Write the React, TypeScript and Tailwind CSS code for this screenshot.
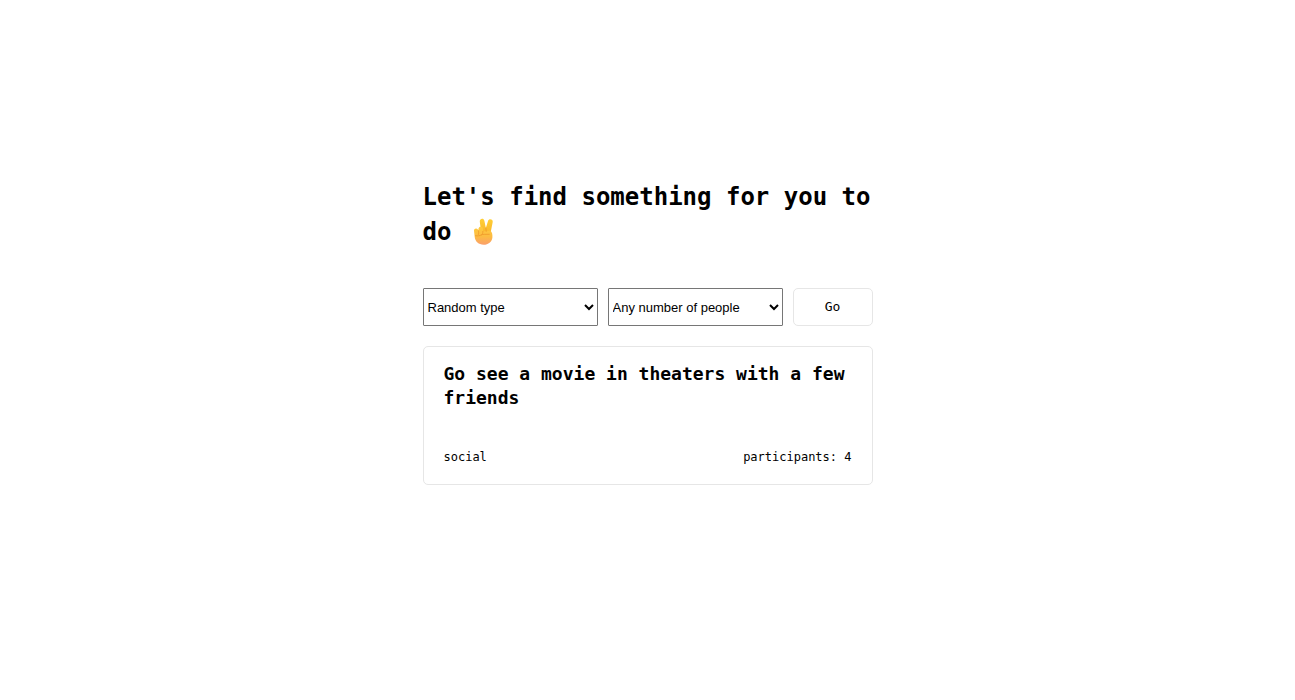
import { useState } from "react";

function VictoryHand() {
  return (
    <svg
      role="img"
      aria-label="victory hand"
      viewBox="0 0 32 32"
      className="ml-1 inline-block h-7 w-7 align-[-6px]"
    >
      <defs>
        <linearGradient id="palm" x1="0" y1="0" x2="0" y2="1">
          <stop offset="0" stopColor="#ffcb3d" />
          <stop offset="0.55" stopColor="#fcbb42" />
          <stop offset="1" stopColor="#fba06c" />
        </linearGradient>
        <linearGradient id="finger" x1="0" y1="0" x2="0" y2="1">
          <stop offset="0" stopColor="#ffcf35" />
          <stop offset="1" stopColor="#f9b52f" />
        </linearGradient>
      </defs>
      <path
        d="M11.200 4.200c-.4-3.800 4.600-4.500 5.300-.9l1.600 8L20.500 3.600c1-3.500 6.200-2.300 5.400 1.300L23.500 17l-10.500 1z"
        fill="url(#finger)"
      />
      <path
        d="M4.600 14.800c-.6-2.800 3-4 4.400-1.600l.5 1 .2-2c.3-3.200 4.900-3 5.100.2l.1 3 8.100-1c2.200 1.600 2.900 4.300 2.600 7.800-.5 5-4.600 8.300-10 8.300-5.800 0-9.700-3.500-10.200-8.700z"
        fill="url(#palm)"
      />
      <path
        d="M9.600 14.600c.5 1.900.4 3 0 4.200M14.700 15.400c0 2-.4 3.200-1.400 3.900M18.100 11.300l.4 4M6.300 20.300c2.900.4 5 0 6.800-1.100 2-.8 4.900-.4 8.900-.6"
        fill="none"
        stroke="#ef9a2c"
        strokeWidth="1"
        strokeLinecap="round"
      />
    </svg>
  );
}

const selectStyle =
  "h-[38px] min-w-0 flex-1 rounded-[1px] border border-[#767676] bg-white font-['Liberation_Sans',Arial,sans-serif] text-[13px] text-black";

export default function App() {
  const [type, setType] = useState("random");
  const [people, setPeople] = useState("any");

  return (
    <main className="flex min-h-screen flex-col items-center justify-center bg-white pb-[35px] font-['DejaVu_Sans_Mono',monospace] text-black">
      <div className="w-full max-w-[450px]">
        <h1 className="mb-[38px] text-2xl leading-[35px] font-bold">
          Let's find something for you to do <VictoryHand />
        </h1>
        <form className="mb-5 flex gap-2.5" onSubmit={(e) => e.preventDefault()}>
          <select
            aria-label="Activity type"
            className={selectStyle}
            value={type}
            onChange={(e) => setType(e.target.value)}
          >
            <option value="random">Random type</option>
            <option value="social">social</option>
          </select>
          <select
            aria-label="Number of people"
            className={selectStyle}
            value={people}
            onChange={(e) => setPeople(e.target.value)}
          >
            <option value="any">Any number of people</option>
            <option value="4">4</option>
          </select>
          <button
            type="submit"
            className="h-[38px] w-20 rounded-[5px] border border-[#e6e6e6] bg-white text-[13px]"
          >
            Go
          </button>
        </form>
        <article className="rounded-[5px] border border-[#e6e6e6] px-5 pt-[15px] pb-[19px]">
          <h2 className="mb-[39px] text-lg leading-6 font-bold">
            Go see a movie in theaters with a few friends
          </h2>
          <div className="flex justify-between text-xs">
            <span>social</span>
            <span>participants: 4</span>
          </div>
        </article>
      </div>
    </main>
  );
}
